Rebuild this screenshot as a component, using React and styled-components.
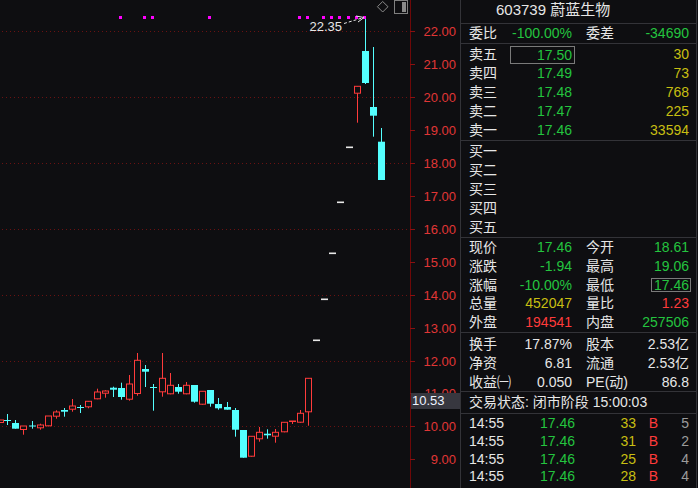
import React from "react";
import styled, { createGlobalStyle } from "styled-components";

const GREEN = "#24c43f";
const RED = "#ff3b3b";
const YELLOW = "#c8bf12";
const CYAN = "#54ffff";
const WHITE = "#e6e6e6";
const BG = "#0e0e11";
const LINE = "#333338";

const GlobalStyle = createGlobalStyle`
  html, body {
    margin: 0;
    padding: 0;
    background: ${BG};
  }
  body {
    font-family: "Liberation Sans", "Noto Sans CJK SC", sans-serif;
  }
`;

const Screen = styled.div`
  display: flex;
  width: 698px;
  height: 488px;
  overflow: hidden;
  background: ${BG};
`;

const ChartBox = styled.div`
  flex: 0 0 460px;
  height: 488px;
`;

const ChartSvg = styled.svg`
  display: block;
  font-family: "Liberation Sans", sans-serif;
`;

const Panel = styled.div`
  flex: 0 0 237px;
  display: flex;
  flex-direction: column;
  box-sizing: border-box;
  border-left: 1px solid ${LINE};
  border-right: 1px solid ${LINE};
  color: ${WHITE};
  font-size: 14px;
  font-family: "Liberation Sans", "Noto Sans CJK SC", sans-serif;
`;

const Title = styled.div`
  height: 23px;
  line-height: 20px;
  padding-left: 35px;
  font-size: 15px;
  border-bottom: 1px solid ${LINE};
`;

const Section = styled.div`
  padding-top: ${(p) => p.$pad || 0}px;
  border-bottom: 1px solid ${LINE};
`;

const Row = styled.div`
  display: grid;
  grid-template-columns: 103px 103px;
  column-gap: 14px;
  align-items: center;
  height: ${(p) => p.$h}px;
  line-height: ${(p) => p.$h}px;
  padding: 0 7px 0 8px;
  white-space: nowrap;
`;

const Pair = styled.div`
  display: flex;
  justify-content: space-between;
  align-items: center;
`;

const Label = styled.span`
  color: ${WHITE};
`;

const Val = styled.span`
  color: ${(p) => p.$c || WHITE};
  ${(p) =>
    p.$box === "wide" &&
    `
    box-sizing: border-box;
    width: 65px;
    margin-right: -3px;
    padding-right: 2px;
    text-align: right;
    border: 1px solid #7a7a7a;
    line-height: 16px;
  `}
  ${(p) =>
    p.$box === "tight" &&
    `
    margin-right: -2px;
    padding: 0 1px 0 2px;
    border: 1px solid #7a7a7a;
    line-height: 12px;
  `}
`;

const Status = styled.div`
  height: 21px;
  line-height: 21px;
  padding-left: 8px;
  border-bottom: 1px solid ${LINE};
`;

const TradeRow = styled.div`
  display: grid;
  grid-template-columns: 40px 66px 61px 22px 1fr;
  height: 17.7px;
  line-height: 17.7px;
  padding: 0 7px 0 8px;
  text-align: right;
  & > span:first-child {
    text-align: left;
  }
`;

const Trades = styled.div`
  padding-top: 1px;
`;

// candle rows: [kind, x, wickTop, wickBottom, bodyTop, bodyBottom]
const CANDLES = [
  ["r", 0.5, 420, 423, 420, 423],
  ["c", 7.5, 414, 425, 420, 421],
  ["c", 15.5, 420, 428.7, 423, 428.7],
  ["r", 23.5, 426, 434.7, 426, 430],
  ["c", 32.5, 421, 428.7, 425.5, 426.5],
  ["r", 40.5, 423.7, 429.7, 425, 428.3],
  ["r", 48.5, 416, 426.3, 416, 426.3],
  ["r", 56.5, 410.3, 418.7, 412, 416.7],
  ["c", 64.5, 408, 416.7, 410, 411.7],
  ["r", 72.5, 399, 411.7, 406, 409.7],
  ["c", 80.5, 405, 413, 407, 408],
  ["r", 88.5, 401, 408.3, 401.3, 407.3],
  ["r", 97.5, 388.7, 399.3, 392, 399.3],
  ["r", 105.5, 390.3, 397.7, 391, 393.7],
  ["c", 113.5, 386.7, 397, 387.7, 389.7],
  ["c", 121.5, 382.7, 399.7, 388, 397],
  ["r", 129.5, 375, 400.7, 384, 399.7],
  ["r", 137.5, 353, 395.7, 360.3, 394],
  ["c", 145.5, 365, 387, 369, 371.7],
  ["c", 153.5, 384, 410.7, 387, 388],
  ["r", 162.5, 353, 396.7, 378.3, 392.3],
  ["r", 170.5, 373, 394.3, 385.3, 394.3],
  ["c", 178.5, 384, 393.7, 387, 391.7],
  ["r", 186.5, 382, 394.3, 385.3, 394.3],
  ["c", 194.5, 385, 402.7, 385, 401.7],
  ["r", 202.5, 391.3, 404.7, 391.3, 404.7],
  ["c", 210.5, 390, 406.7, 390, 403.7],
  ["c", 218.5, 398, 409.7, 404, 408.3],
  ["c", 227.5, 402, 409.7, 407, 409.7],
  ["c", 235.5, 408, 436.7, 410, 429.7],
  ["c", 243.5, 430, 457.7, 430, 457.7],
  ["r", 251.5, 436.3, 456.7, 436.3, 456.7],
  ["r", 259.5, 427, 441.7, 432.3, 439.3],
  ["c", 267.5, 429.3, 438.7, 433.7, 435.3],
  ["r", 275.5, 429, 442.7, 432.3, 436.7],
  ["r", 284.5, 422.3, 432.3, 422.3, 432.3],
  ["r", 292.5, 421, 424, 421, 422],
  ["r", 300.5, 410, 422.7, 413.3, 422.7],
  ["r", 308.5, 378.3, 425.7, 378.3, 412.3],
  ["w", 316.5, 340],
  ["w", 324.5, 299],
  ["w", 332.5, 253],
  ["w", 340.5, 202],
  ["w", 349.5, 147],
  ["r", 357.5, 86.3, 122.7, 86.3, 93.7],
  ["c", 365.5, 16.7, 84, 51, 83],
  ["c", 373.5, 47, 136.7, 107, 115.7],
  ["c", 381.5, 128, 180, 141.7, 180],
];

const MARKS = [119, 143, 151, 208, 298, 306, 322, 330, 338, 347, 355, 363];

const p2y = (p) => 31 + (22 - p) * 32.95;
const AXIS = [22, 21, 20, 19, 18, 17, 16, 15, 14, 13, 12, 11, 10, 9, 8];
const GRID = [22, 20, 18, 16, 14, 12, 10];

function Candle({ d }) {
  const [kind, x] = d;
  if (kind === "w") {
    return <rect x={x - 3.5} y={d[2] - 0.5} width={7} height={1.6} fill="#e8e8e8" />;
  }
  const [, , wt, wb, bt, bb] = d;
  const h = Math.max(bb - bt, 1);
  if (kind === "c") {
    return (
      <g>
        <line x1={x} x2={x} y1={wt} y2={wb} stroke={CYAN} strokeWidth={1} />
        <rect x={x - 3.5} y={bt} width={7} height={h} fill={CYAN} />
      </g>
    );
  }
  return (
    <g>
      <line x1={x} x2={x} y1={wt} y2={wb} stroke={RED} strokeWidth={1} />
      <rect x={x - 3} y={bt} width={6} height={Math.max(h - 0.5, 0.5)} fill={BG} stroke={RED} strokeWidth={1} />
    </g>
  );
}

function KChart() {
  return (
    <ChartSvg width="460" height="488" viewBox="0 0 460 488">
      {GRID.map((p) => (
        <line
          key={p}
          x1={2}
          x2={408}
          y1={Math.round(p2y(p)) + 0.5}
          y2={Math.round(p2y(p)) + 0.5}
          stroke="#6a1212"
          strokeDasharray="1 3"
        />
      ))}
      <line x1={410.5} x2={410.5} y1={0} y2={488} stroke="#6e0808" />
      {AXIS.map((p) => {
        const y = Math.round(p2y(p)) + 0.5;
        return (
          <g key={p}>
            <line x1={410} x2={415} y1={y} y2={y} stroke="#8a1010" />
            <text x={456} y={y + 4.5} textAnchor="end" fontSize="13" fill="#e03636">
              {p.toFixed(2)}
            </text>
          </g>
        );
      })}
      {CANDLES.map((d, i) => (
        <Candle key={i} d={d} />
      ))}
      {MARKS.map((x) => (
        <rect key={x} x={x} y={16} width={3} height={3} fill="#ff00ff" />
      ))}
      <text x={342} y={30.5} textAnchor="end" fontSize="13" fill="#e6e6e6">
        22.35
      </text>
      <line x1={344} y1={23.5} x2={362} y2={18} stroke="#e6e6e6" strokeDasharray="3 2" />
      <polyline points="356,16 364,17.5 358,22" fill="none" stroke="#e6e6e6" />
      <polygon points="382.7,1.5 388,6.7 382.7,12 377.4,6.7" fill="none" stroke="#8a8a8a" />
      <rect x={394.5} y={0.5} width={13} height={13} fill="none" stroke="#808080" />
      <rect x={402} y={2} width={4} height={10} fill="#8a8a8a" />
      <rect x={411} y={393} width={49} height={16} fill="#37373f" />
      <text x={412} y={405} fontSize="13" fill="#eef3ff">
        10.53
      </text>
    </ChartSvg>
  );
}

const SELLS = [
  ["卖五", "17.50", "30"],
  ["卖四", "17.49", "73"],
  ["卖三", "17.48", "768"],
  ["卖二", "17.47", "225"],
  ["卖一", "17.46", "33594"],
];

const BUYS = ["买一", "买二", "买三", "买四", "买五"];

const QUOTES = [
  ["现价", "17.46", GREEN, "今开", "18.61", GREEN],
  ["涨跌", "-1.94", GREEN, "最高", "19.06", GREEN],
  ["涨幅", "-10.00%", GREEN, "最低", "17.46", GREEN, true],
  ["总量", "452047", YELLOW, "量比", "1.23", RED],
  ["外盘", "194541", RED, "内盘", "257506", GREEN],
];

const FUNDS = [
  ["换手", "17.87%", "股本", "2.53亿"],
  ["净资", "6.81", "流通", "2.53亿"],
  ["收益㈠", "0.050", "PE(动)", "86.8"],
];

const TRADES = [
  ["14:55", "17.46", "33", "B", "5"],
  ["14:55", "17.46", "31", "B", "2"],
  ["14:55", "17.46", "25", "B", "4"],
  ["14:55", "17.46", "28", "B", "4"],
];

function QuotePanel() {
  return (
    <Panel>
      <Title>603739 蔚蓝生物</Title>
      <Section>
        <Row $h={19}>
          <Pair>
            <Label>委比</Label>
            <Val $c={GREEN}>-100.00%</Val>
          </Pair>
          <Pair>
            <Label>委差</Label>
            <Val $c={GREEN}>-34690</Val>
          </Pair>
        </Row>
      </Section>
      <Section $pad={1}>
        {SELLS.map(([name, price, vol], i) => (
          <Row key={name} $h={19}>
            <Pair>
              <Label>{name}</Label>
              <Val $c={GREEN} $box={i === 0 ? "wide" : undefined}>
                {price}
              </Val>
            </Pair>
            <Pair>
              <span />
              <Val $c={YELLOW}>{vol}</Val>
            </Pair>
          </Row>
        ))}
      </Section>
      <Section $pad={1}>
        {BUYS.map((name) => (
          <Row key={name} $h={19}>
            <Pair>
              <Label>{name}</Label>
            </Pair>
          </Row>
        ))}
      </Section>
      <Section>
        {QUOTES.map(([l1, v1, c1, l2, v2, c2, boxed]) => (
          <Row key={l1} $h={18.8}>
            <Pair>
              <Label>{l1}</Label>
              <Val $c={c1}>{v1}</Val>
            </Pair>
            <Pair>
              <Label>{l2}</Label>
              <Val $c={c2} $box={boxed ? "tight" : undefined}>
                {v2}
              </Val>
            </Pair>
          </Row>
        ))}
      </Section>
      <Section $pad={2}>
        {FUNDS.map(([l1, v1, l2, v2]) => (
          <Row key={l1} $h={18.8}>
            <Pair>
              <Label>{l1}</Label>
              <Val>{v1}</Val>
            </Pair>
            <Pair>
              <Label>{l2}</Label>
              <Val>{v2}</Val>
            </Pair>
          </Row>
        ))}
      </Section>
      <Status>交易状态: 闭市阶段 15:00:03</Status>
      <Trades>
        {TRADES.map(([t, p, v, side, n], i) => (
          <TradeRow key={i}>
            <span>{t}</span>
            <Val $c={GREEN}>{p}</Val>
            <Val $c={YELLOW}>{v}</Val>
            <Val $c={RED}>{side}</Val>
            <Val $c="#9c9c9c">{n}</Val>
          </TradeRow>
        ))}
      </Trades>
    </Panel>
  );
}

export default function App() {
  return (
    <>
      <GlobalStyle />
      <Screen>
        <ChartBox>
          <KChart />
        </ChartBox>
        <QuotePanel />
      </Screen>
    </>
  );
}
